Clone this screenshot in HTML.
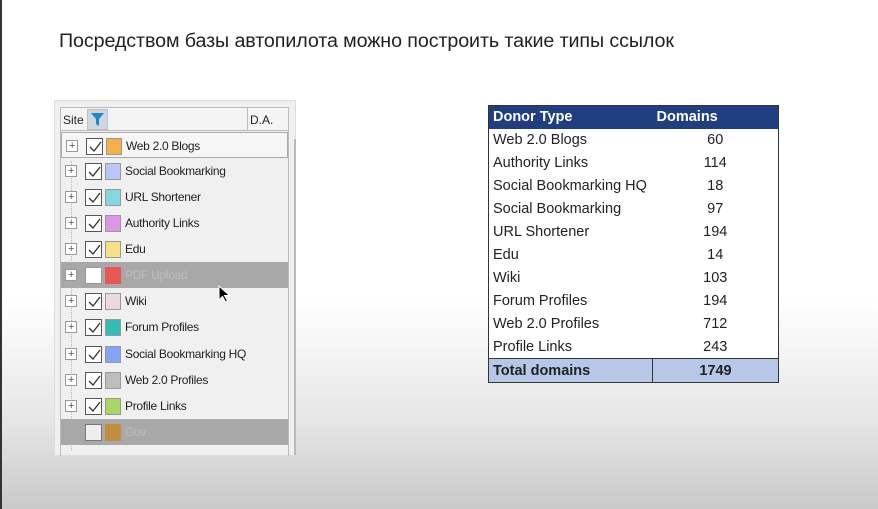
<!DOCTYPE html>
<html><head><meta charset="utf-8"><style>
*{margin:0;padding:0;box-sizing:border-box}
body{width:878px;height:509px;overflow:hidden;position:relative;font-family:"Liberation Sans",sans-serif;background:linear-gradient(to bottom,#fff 0,#fff 300px,#e6e6e6 420px,#c9c9c9 509px)}
.edge{position:absolute;left:0;top:0;width:2px;height:509px;background:#333}
.title{position:absolute;left:59px;top:30px;font-size:19.7px;color:#222;white-space:nowrap;letter-spacing:-0.1px}
.panel{position:absolute;left:54px;top:100px;width:242px;height:356px;background:#f0f0f0;border:1px solid #ddd}
.hdr{position:absolute;left:5px;top:6px;width:229px;height:24px;border:1px solid #bbb;background:#f4f4f4;font-size:12px;color:#222}
.hdr span{position:absolute;top:5px}
.filt{position:absolute;left:26px;top:1px;width:21px;height:21px;background:#cfd7df;border:1px solid #b8c0c8}
.dl{position:absolute;left:186px;top:0;width:1px;height:22px;background:#bbb}
.list{position:absolute;left:5px;top:30px;width:229px;height:325px;border-left:1px solid #bbb;border-right:1px solid #bbb}
.row{position:absolute;left:0;width:227px;height:26px;font-size:12px;color:#222;letter-spacing:-0.3px}
.row .pl{position:absolute;left:4px;top:7px;width:12px;height:12px;border:1px solid #999;background:#fff;font-size:11px;line-height:10px;text-align:center;color:#555}
.row .cb{position:absolute;left:24px;top:5px;width:17px;height:17px;border:1px solid #555;background:#fff}
.row .cb svg{position:absolute;left:1px;top:1px}
.row .sw{position:absolute;left:44px;top:5px;width:16px;height:17px;border:1px solid #999}
.row .t{position:absolute;left:64px;top:6px;white-space:nowrap}
.g{background:#a8a8a8}
.g .t{color:#bdbdbd}
.sel{border:1px solid #aaa;background:#f6f6f6}
.vline{position:absolute;left:10px;top:30px;width:1px;height:290px;border-left:1px dotted #bbb}
.sb{position:absolute;left:239px;top:38px;width:2px;height:316px;background:#bbb}
table{position:absolute;left:488px;top:105px;width:291px;border-collapse:collapse;font-size:14.5px;color:#222;background:#fff;border:1px solid #333}
td{height:23px;padding:0 4px;line-height:22px}
td:nth-child(2){text-align:center}
th{background:#203f80;color:#fff;text-align:left;height:23px;padding:0 4px;font-size:14.5px}
th:nth-child(2){padding-left:4px;text-align:left}
tr.tot td{background:#b7c7e7;font-weight:bold;border-top:1px solid #333;height:24px}
tr.tot td:nth-child(2){border-left:1px solid #333}
</style></head><body>
<div class="edge"></div>
<div class="title">Посредством базы автопилота можно построить такие типы ссылок</div>
<div class="panel">
<div class="hdr"><span style="left:2px">Site</span><div class="filt"><svg width="19" height="19" viewBox="0 0 19 19"><path d="M3 3h13l-5 6v7l-3-2V9z" fill="#1e88d0"/></svg></div><div class="dl"></div><span style="left:189px">D.A.</span></div>
<div class="list">
<div class="vline"></div>
<div class="row sel" style="top:1px"><div class="pl">+</div><div class="cb"><svg width="14" height="14"><path d="M2 7l4 4 7-9" stroke="#333" fill="none" stroke-width="1.3"/></svg></div><div class="sw" style="background:#f6b04a"></div><div class="t">Web 2.0 Blogs</div></div>
<div class="row" style="top:27px"><div class="pl">+</div><div class="cb"><svg width="14" height="14"><path d="M2 7l4 4 7-9" stroke="#333" fill="none" stroke-width="1.3"/></svg></div><div class="sw" style="background:#bcc6f6"></div><div class="t">Social Bookmarking</div></div>
<div class="row" style="top:53px"><div class="pl">+</div><div class="cb"><svg width="14" height="14"><path d="M2 7l4 4 7-9" stroke="#333" fill="none" stroke-width="1.3"/></svg></div><div class="sw" style="background:#86d8df"></div><div class="t">URL Shortener</div></div>
<div class="row" style="top:79px"><div class="pl">+</div><div class="cb"><svg width="14" height="14"><path d="M2 7l4 4 7-9" stroke="#333" fill="none" stroke-width="1.3"/></svg></div><div class="sw" style="background:#dd96e6"></div><div class="t">Authority Links</div></div>
<div class="row" style="top:105px"><div class="pl">+</div><div class="cb"><svg width="14" height="14"><path d="M2 7l4 4 7-9" stroke="#333" fill="none" stroke-width="1.3"/></svg></div><div class="sw" style="background:#f6e182"></div><div class="t">Edu</div></div>
<div class="row g" style="top:131px"><div class="pl">+</div><div class="cb" style="border-color:#999"></div><div class="sw" style="background:#e85656;border-color:#e85656"></div><div class="t">PDF Upload</div></div>
<div class="row" style="top:157px"><div class="pl">+</div><div class="cb"><svg width="14" height="14"><path d="M2 7l4 4 7-9" stroke="#333" fill="none" stroke-width="1.3"/></svg></div><div class="sw" style="background:#eadadd"></div><div class="t">Wiki</div></div>
<div class="row" style="top:183px"><div class="pl">+</div><div class="cb"><svg width="14" height="14"><path d="M2 7l4 4 7-9" stroke="#333" fill="none" stroke-width="1.3"/></svg></div><div class="sw" style="background:#2fbdb4"></div><div class="t">Forum Profiles</div></div>
<div class="row" style="top:210px"><div class="pl">+</div><div class="cb"><svg width="14" height="14"><path d="M2 7l4 4 7-9" stroke="#333" fill="none" stroke-width="1.3"/></svg></div><div class="sw" style="background:#86a4f6"></div><div class="t">Social Bookmarking HQ</div></div>
<div class="row" style="top:236px"><div class="pl">+</div><div class="cb"><svg width="14" height="14"><path d="M2 7l4 4 7-9" stroke="#333" fill="none" stroke-width="1.3"/></svg></div><div class="sw" style="background:#bdbdbd"></div><div class="t">Web 2.0 Profiles</div></div>
<div class="row" style="top:262px"><div class="pl">+</div><div class="cb"><svg width="14" height="14"><path d="M2 7l4 4 7-9" stroke="#333" fill="none" stroke-width="1.3"/></svg></div><div class="sw" style="background:#a6d862"></div><div class="t">Profile Links</div></div>
<div class="row g" style="top:288px"><div class="cb" style="border-color:#777;background:#eee"></div><div class="sw" style="background:#c08e3c;border-color:#c08e3c"></div><div class="t">Gov</div></div>
</div>
<div class="sb"></div>
<svg style="position:absolute;left:163px;top:184px" width="12" height="18" viewBox="0 0 12 18"><path d="M1 1v14l3.5-3.5 3 5.5 2-1-3-5.5h5z" fill="#000" stroke="#fff" stroke-width="1"/></svg>
</div>
<table>
<tr><th>Donor Type</th><th>Domains</th></tr>
<tr><td>Web 2.0 Blogs</td><td>60</td></tr>
<tr><td>Authority Links</td><td>114</td></tr>
<tr><td>Social Bookmarking HQ</td><td>18</td></tr>
<tr><td>Social Bookmarking</td><td>97</td></tr>
<tr><td>URL Shortener</td><td>194</td></tr>
<tr><td>Edu</td><td>14</td></tr>
<tr><td>Wiki</td><td>103</td></tr>
<tr><td>Forum Profiles</td><td>194</td></tr>
<tr><td>Web 2.0 Profiles</td><td>712</td></tr>
<tr><td>Profile Links</td><td>243</td></tr>
<tr class="tot"><td style="width:164px">Total domains</td><td style="text-align:center">1749</td></tr>
</table>
</body></html>
